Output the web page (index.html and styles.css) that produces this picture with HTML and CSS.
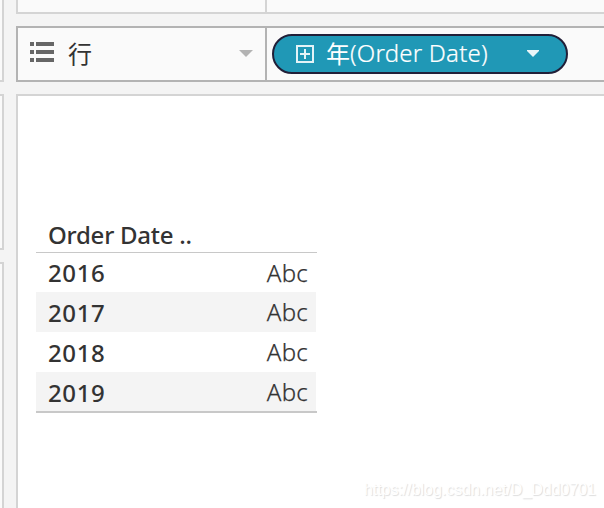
FILE: index.html
```html
<!DOCTYPE html>
<html lang="zh">
<head>
<meta charset="utf-8">
<title>Order Date</title>
<link rel="stylesheet" href="styles.css">
</head>
<body>
<div class="app">
  <aside class="side">
    <div class="card card-first"></div>
    <div class="card card-middle"></div>
    <div class="card card-last"></div>
  </aside>
  <main class="work">
    <section class="shelf shelf-columns"><div class="shelf-label"></div></section>
    <section class="shelf shelf-rows">
      <div class="shelf-label">
        <svg class="list-icon" width="24" height="20" viewBox="0 0 24 20"><path fill="#666" d="M0 0h4v4H0zM6 0h18v4H6zM0 8h4v4H0zM6 8h18v4H6zM0 16h4v4H0zM6 16h18v4H6z"/></svg>
        <span class="shelf-name">行</span>
        <svg class="caret" width="14" height="7" viewBox="0 0 14 7"><path fill="#b3b3b3" d="M0 0h14L7 7z"/></svg>
      </div>
      <div class="pill">
        <svg class="plus" width="18" height="18" viewBox="0 0 18 18"><path fill="none" stroke="#e4f3f7" stroke-width="2" d="M1 1h16v16H1zM9 4v10M4 9h10"/></svg>
        <span class="pill-cjk">年</span><span class="pill-text">(Order Date)</span>
        <svg class="pill-caret" width="12" height="7" viewBox="0 0 12 7"><path fill="#e9f5f8" d="M0 0h12v1L6 7 0 1z"/></svg>
      </div>
    </section>
    <section class="sheet">
      <div class="table">
        <div class="head">Order Date ..</div>
        <div class="row"><span class="year">2016</span><span class="mark">Abc</span></div>
        <div class="row shaded"><span class="year">2017</span><span class="mark">Abc</span></div>
        <div class="row"><span class="year">2018</span><span class="mark">Abc</span></div>
        <div class="row shaded"><span class="year">2019</span><span class="mark">Abc</span></div>
        <div class="rule"></div>
      </div>
      <div class="watermark">https://blog.csdn.net/D_Ddd0701</div>
    </section>
  </main>
</div>
</body>
</html>
```
FILE: styles.css
```css
* { box-sizing: border-box; }
body { margin: 0; background: #f4f4f4; color: #333; font-family: "Noto Sans", "Noto Sans CJK SC", sans-serif; }
.app { display: flex; gap: 12px; width: 604px; height: 508px; overflow: hidden; }
.side { width: 4px; display: flex; flex-direction: column; gap: 12px; }
.card { border: 2px solid #d4d4d4; border-left: 0; background: #fafafa; }
.card-first { height: 82px; border-top: 0; }
.card-middle { height: 156px; }
.card-last { flex: 1; border-bottom: 0; }
.work { flex: 1; min-width: 0; display: flex; flex-direction: column; gap: 12px; }
.shelf { display: flex; align-items: center; background: #fafafa; border: 2px solid #d4d4d4; border-right: 0; }
.shelf-columns { height: 14px; border-top: 0; }
.shelf-rows { height: 56px; border-color: #b3b3b3; }
.shelf-label { flex: none; width: 249px; height: 100%; border-right: 2px solid #d4d4d4; display: flex; align-items: center; padding: 0 12px; }
.shelf-rows .shelf-label { border-color: #b3b3b3; }
.list-icon { margin-top: -4px; }
.shelf-name { margin: -2px 0 0 14px; font: 24px/36px "Noto Sans CJK SC", sans-serif; }
.caret { margin: -1px 0 0 auto; }
.pill { margin-left: 5px; width: 296px; height: 40px; border: 2px solid #211f38; border-radius: 20px; background: #2098b6; color: #fff; display: flex; align-items: center; padding: 0 27px 0 22px; white-space: nowrap; }
.plus { flex: none; }
.pill-cjk { margin: -2px 0 0 12px; font: 24px/36px "Noto Sans CJK SC", sans-serif; }
.pill-text { margin-top: -2px; font-size: 24px; line-height: 36px; font-weight: 300; letter-spacing: 0.2px; -webkit-text-stroke: 0.2px #fff; }
.pill-caret { flex: none; margin: -1px 0 0 auto; }
.sheet { flex: 1; background: #fff; border: 2px solid #d4d4d4; border-right: 0; border-bottom: 0; padding: 120px 8px 8px 18px; display: flex; flex-direction: column; justify-content: space-between; }
.table { width: 281px; font-size: 24px; }
.head { height: 37px; padding-left: 12px; line-height: 38px; border-bottom: 1px solid #c8c8c8; font-weight: 500; letter-spacing: -0.25px; }
.row { width: 280px; height: 40px; padding: 0 8px 0 12px; display: flex; justify-content: space-between; line-height: 40px; }
.row:nth-child(2) { height: 39px; }
.shaded { background: #f4f4f4; }
.rule { height: 2px; margin-top: -1px; background: #c8c8c8; }
.year { font-weight: 500; letter-spacing: 0.6px; line-height: 42px; }
.row:nth-child(2) .year { line-height: 40px; }
.row:nth-child(2) .mark { line-height: 39px; }
.mark { font-weight: 300; letter-spacing: 0.25px; -webkit-text-stroke: 0.25px #333; }
.watermark { align-self: flex-end; font: 16px/20px "Liberation Sans", sans-serif; letter-spacing: -0.03px; color: #fff; text-shadow: 1px 1px 1px #ddd; }
```
